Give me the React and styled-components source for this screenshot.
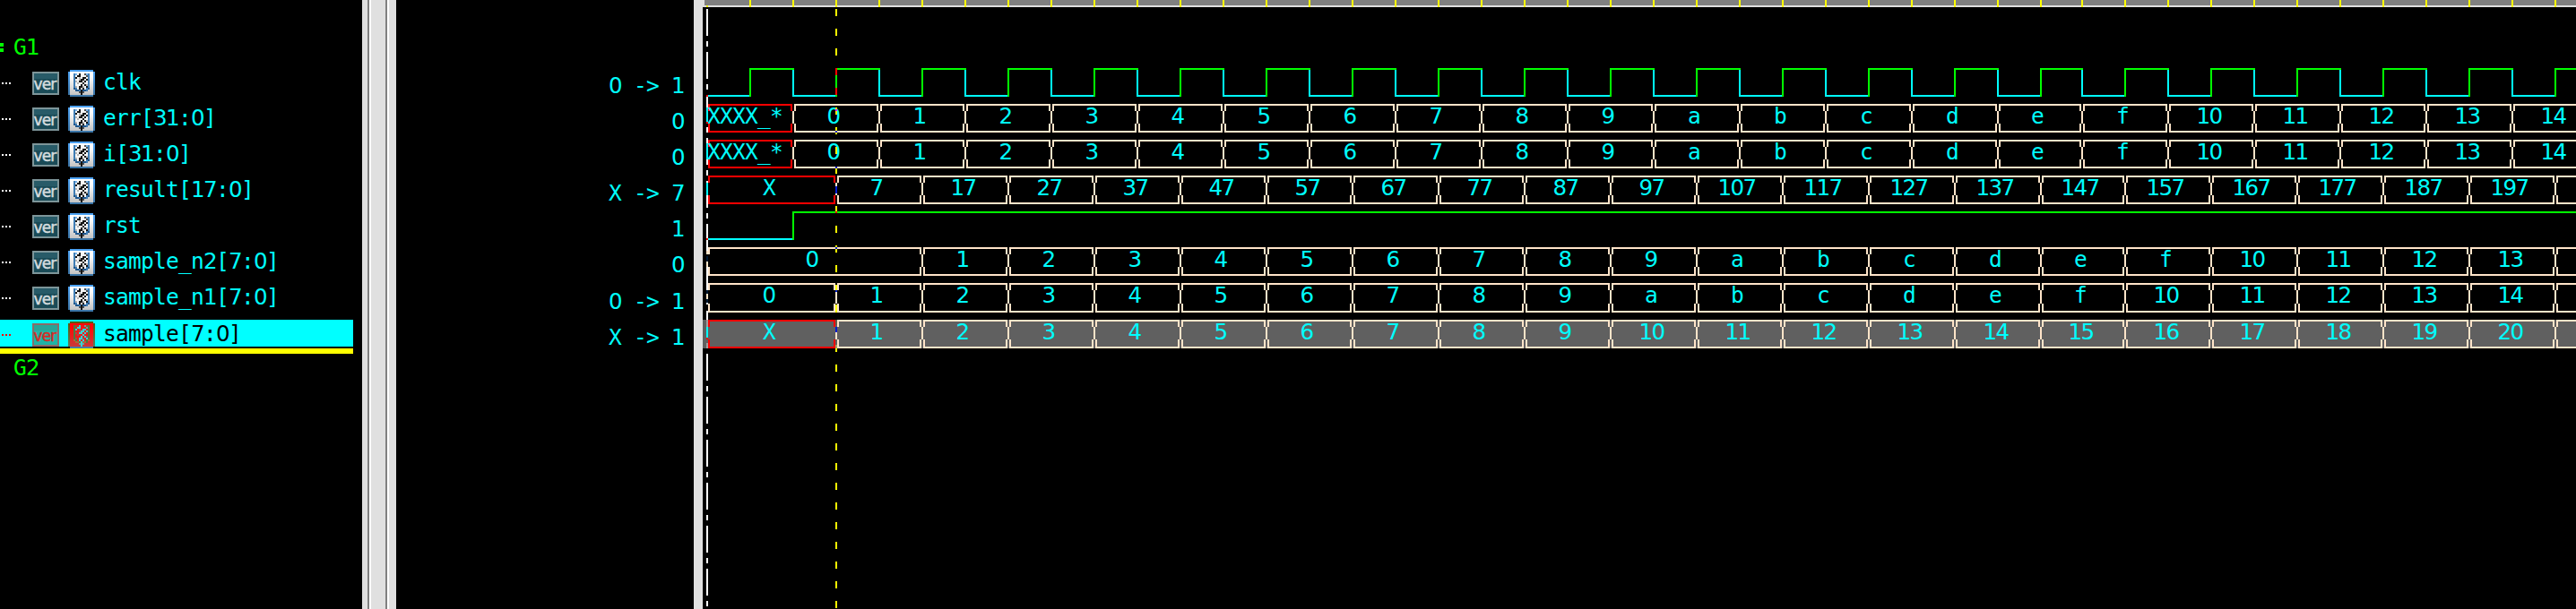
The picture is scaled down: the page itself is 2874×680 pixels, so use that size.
import React from "react";
import styled, { createGlobalStyle } from "styled-components";

const GlobalStyle = createGlobalStyle`
  html, body { margin: 0; padding: 0; background: #000; overflow: hidden; }
`;

const MONO = '"DejaVu Sans Mono", monospace';
const SANS = '"DejaVu Sans", sans-serif';
const CYAN = "#00ffff";
const GREEN = "#00ff00";
const RED = "#ff0000";
const TAN = "#ffe4c9";

const Viewer = styled.div`
  display: flex;
  width: 2874px;
  height: 680px;
  background: #000;
  overflow: hidden;
  font-family: ${MONO};
  font-size: 24.5px;
  letter-spacing: -0.75px;
  line-height: 30px;
  white-space: pre;
`;

const NamesPane = styled.div`
  width: 404px;
  flex: none;
  overflow: hidden;
`;

const Splitter = styled.div`
  width: 38px;
  flex: none;
  background: linear-gradient(
    90deg,
    #e0e0e0 0 6px, #808080 6px 8px, #fff 8px 10px,
    #e0e0e0 10px 26px, #808080 26px 28px, #fff 28px 30px, #e0e0e0 30px
  );
`;

const ValuesPane = styled.div`
  width: 332px;
  flex: none;
  box-sizing: border-box;
  padding: 76px 11px 0 0;
  color: ${CYAN};
  text-align: right;
`;

const Border = styled.div`
  width: 10px;
  flex: none;
  background: #e0e0e0;
`;

const WavePane = styled.div`
  width: 2090px;
  flex: none;
  position: relative;
  overflow: hidden;
`;

const Digits = styled.span`
  font-family: ${SANS};
  letter-spacing: -1.59px;
`;

const Group = styled.div`
  display: flex;
  align-items: flex-start;
  box-sizing: border-box;
  height: ${(p) => p.$height}px;
  padding-top: ${(p) => p.$top}px;
  color: ${GREEN};
`;

const Expander = styled.span`
  width: 4px;
  height: 10px;
  margin: 10px 11px 0 0;
  background: ${(p) =>
    p.$open ? `linear-gradient(${GREEN} 0 4px, transparent 4px 6px, ${GREEN} 6px)` : "none"};
`;

const SignalRow = styled.div`
  display: flex;
  align-items: flex-start;
  width: 394px;
  height: ${(p) => p.$height}px;
  color: ${(p) => (p.$selected ? "#000" : CYAN)};
  background: ${(p) => (p.$selected ? CYAN : "none")};
`;

const Branch = styled.span`
  width: 10px;
  height: 2px;
  margin: 16px 24px 0 2px;
  background: repeating-linear-gradient(
    90deg,
    ${(p) => (p.$selected ? RED : "#fff")} 0 2px,
    transparent 2px 4px
  );
`;

const VerBadge = styled.span`
  box-sizing: border-box;
  width: 30px;
  height: 26px;
  margin: 4px 10px 0 0;
  border: 2px solid ${(p) => (p.$selected ? "#8a6b68" : "#7d9599")};
  background: ${(p) =>
    p.$selected
      ? "linear-gradient(#28a497 0 6px, #20b2a5 6px)"
      : "linear-gradient(#285b68 0 6px, #1a4b57 6px)"};
  color: ${(p) => (p.$selected ? "#d82a26" : "#d5dcdf")};
  font: 17px/25px ${SANS};
  letter-spacing: -0.9px;
  text-indent: -0.5px;
  -webkit-text-stroke: 0.5px currentColor;
`;

const SignalIcon = styled.svg`
  flex: none;
  display: block;
  width: 30px;
  height: 30px;
  margin: 2px 9px 0 0;
`;

const SignalName = styled.span`
  padding-top: 1px;
`;

const InsertMark = styled.div`
  width: 394px;
  height: 6px;
  margin-top: 2px;
  background: #ff0;
`;

const ValueCell = styled.div`
  box-sizing: border-box;
  height: ${(p) => p.$height}px;
  padding-top: ${(p) => p.$top}px;
`;

const Ruler = styled.svg`
  display: block;
  width: 2090px;
  height: 8px;
  margin-bottom: 68px;
`;

const Lane = styled.svg`
  display: block;
  width: 2090px;
  height: ${(p) => p.$height}px;
  position: relative;
`;

const Cursors = styled.svg`
  position: absolute;
  left: 0;
  top: 0;
  width: 2090px;
  height: 680px;
  pointer-events: none;
`;

const split = (text) => text.split(/(\d+)/).filter(Boolean);

function Text({ children }) {
  return split(children).map((s, i) => (/\d/.test(s) ? <Digits key={i}>{s}</Digits> : s));
}

// 15x15 pixel map of the register symbol
const GLYPH = [
  "...............",
  "...............",
  "...blwkwwdlb...",
  "...bwkkwwwdb...",
  "...bkwgwkkwb...",
  "...bwwgkkwkb...",
  "...bgwkkwkwb...",
  "...bwgwwkwwb...",
  "...bwwwkwkgb...",
  "...bgwkkgwkb...",
  "...nbwkwkwbn...",
  "....nnbknnb....",
  "......dkd......",
  ".......k.......",
  "...............",
];

const INK = { b: "#3f7db5", l: "#79b4ea", k: "#141414", w: "#f6f6f6", g: "#b5b5b5", d: "#505050", n: "#1f568c" };
const INK_SELECTED = { b: "#4c7a3f", l: "#8c5a2a", k: "#35d5d5", w: "#f01818", g: "#9b5050", d: "#6aa0a0", n: "#a96a3a" };

function RegisterIcon({ selected }) {
  const ink = selected ? INK_SELECTED : INK;
  const id = selected ? "face-selected" : "face";
  return (
    <SignalIcon viewBox="0 0 15 15" shapeRendering="crispEdges">
      <defs>
        <linearGradient id={id} x1="0" y1="0" x2="0" y2="1">
          <stop offset="0.2" stopColor={selected ? "#ff0808" : "#fff"} />
          <stop offset="1" stopColor={selected ? "#c83a3a" : "#c4c4c4"} />
        </linearGradient>
        <linearGradient id={`${id}-edge`} x1="0" y1="0" x2="0" y2="1">
          <stop offset="0" stopColor={selected ? "#5a5a10" : "#4da3f5"} />
          <stop offset="1" stopColor={selected ? "#5a7a5a" : "#3b74a5"} />
        </linearGradient>
      </defs>
      <rect x="1" y="0" width="13" height="15" fill={`url(#${id}-edge)`} />
      <rect x="0" y="1" width="15" height="13" fill={`url(#${id}-edge)`} />
      <rect x="1" y="1" width="13" height="13" fill={`url(#${id})`} />
      {selected && <rect x="1" y="14" width="13" height="1" fill="#4a7ba3" />}
      {GLYPH.flatMap((row, y) =>
        [...row].map((c, x) =>
          c === "." ? null : <rect key={`${x}-${y}`} x={x} y={y} width="1" height="1" fill={ink[c]} />
        )
      )}
    </SignalIcon>
  );
}

// Edge k of the time axis, in pane pixels
const edge = (k) => 4 + 48 * k - (k >= 32 ? 2 : 0);
const LAST = 45;

const series = (first, format) => {
  const cells = [];
  for (let k = first, j = 0; k < 44; k += 2, j++) cells.push({ from: k, to: k + 2, text: k > 42 ? "" : format(j) });
  return cells;
};
const hex = (n) => n.toString(16);

const SIGNALS = [
  { name: "clk", value: "0 -> 1", height: 40, kind: "clock" },
  { name: "err[31:0]", value: "0", height: 40,
    cells: [{ from: 0, to: 2, text: "XXXX_*", unknown: true, at: 6 }, ...series(2, hex)] },
  { name: "i[31:0]", value: "0", height: 40,
    cells: [{ from: 0, to: 2, text: "XXXX_*", unknown: true, at: 6 }, ...series(2, hex)] },
  { name: "result[17:0]", value: "X -> 7", height: 40,
    cells: [{ from: 0, to: 3, text: "X", unknown: true }, ...series(3, (j) => String(7 + 10 * j))] },
  { name: "rst", value: "1", height: 40, kind: "reset" },
  { name: "sample_n2[7:0]", value: "0", height: 40,
    cells: [{ from: 0, to: 5, text: "0" }, ...series(5, (j) => hex(j + 1))] },
  { name: "sample_n1[7:0]", value: "0 -> 1", height: 41, tall: 1,
    cells: [{ from: 0, to: 3, text: "0" }, ...series(3, (j) => hex(j + 1))] },
  { name: "sample[7:0]", value: "X -> 1", height: 32, selected: true,
    cells: [{ from: 0, to: 3, text: "X", unknown: true }, ...series(3, (j) => String(j + 1))] },
];

function Bar({ x, y, w, h, c }) {
  return <rect x={x} y={y} width={w} height={h} fill={c} />;
}

function Clock() {
  const parts = [];
  for (let k = 0; k < LAST; k++) {
    const a = edge(k);
    const b = edge(k + 1);
    if (k % 2) {
      parts.push(<Bar key={k} x={a} y={0} w={2} h={32} c={GREEN} />);
      parts.push(<Bar key={`h${k}`} x={a} y={0} w={b - a + 2} h={2} c={GREEN} />);
    } else {
      if (k) parts.push(<Bar key={k} x={a} y={2} w={2} h={30} c={CYAN} />);
      parts.push(<Bar key={`h${k}`} x={k ? a : 6} y={30} w={b - (k ? a : 6)} h={2} c={CYAN} />);
    }
  }
  return parts;
}

function Reset() {
  return (
    <>
      <Bar x={6} y={30} w={94} h={2} c={CYAN} />
      <Bar x={100} y={0} w={2} h={32} c={GREEN} />
      <Bar x={100} y={0} w={1990} h={2} c={GREEN} />
    </>
  );
}

function BusCell({ from, to, text, unknown, at, tall = 0 }) {
  const a = edge(from);
  const b = edge(to);
  const c = unknown ? RED : TAN;
  const x = at ?? (a + b) / 2 - 2 * Math.ceil(text.length * 3.5);
  const start = /^\d/.test(text) ? x - 1.5 : x - 1;
  return (
    <>
      <path
        fill={c}
        d={`M${a + 2} 0H${b}V8H${b - 2}V2H${a + 4}V8H${a + 2}Z
            M${a + 2} ${22 + tall}H${a + 4}V${30 + tall}H${b - 2}V${22 + tall}H${b}V${32 + tall}H${a + 2}Z`}
      />
      {from > 0 && <Bar x={a} y={8} w={2} h={14 + tall} c={TAN} />}
      {text && (
        <text x={start} y={22} fill={CYAN} fontFamily={MONO}>
          {split(text).map((s, i) =>
            /\d/.test(s) ? (
              <tspan key={i} fontFamily={SANS} letterSpacing="-1.59">{s}</tspan>
            ) : (
              <tspan key={i}>{s}</tspan>
            )
          )}
        </text>
      )}
    </>
  );
}

const range = (start, end, step) => {
  const out = [];
  for (let y = start; y < end; y += step) out.push(y);
  return out;
};
const shift = (y) => (y > 345 ? y + 1 : y);

// Pixels where a cursor line crosses a signal: [x, y, height, colour]
const CROSSINGS = [
  [4, 106, 2, RED],
  [4, 120, 16, CYAN], [4, 136, 2, RED],
  [4, 160, 18, CYAN],
  [4, 204, 14, CYAN],
  [4, 266, 2, RED],
  [4, 280, 4, TAN], [4, 286, 6, "#001a33"], [4, 292, 6, TAN],
  [4, 324, 4, "#001a33"], [4, 328, 6, TAN], [4, 334, 4, "#001a33"],
  [4, 357, 8, "#9f9f9f"], [4, 365, 12, CYAN], [4, 377, 2, RED], [4, 383, 6, "#9f9f9f"],
  [148, 76, 8, RED], [148, 98, 8, RED],
  [148, 120, 2, "#ff0"], [148, 122, 2, "#ff00ff"], [148, 124, 4, "#ff0"],
  [148, 142, 4, "#ff0"], [148, 146, 2, "#001bd0"], [148, 148, 2, "#ff0"],
  [148, 164, 8, "#ff0"], [148, 186, 2, "#001bd0"],
  [148, 208, 8, "#001bd0"], [148, 236, 2, RED],
  [148, 276, 2, "#001bd0"],
  [148, 318, 6, "#ff0"], [148, 324, 2, "#001bd0"], [148, 341, 8, "#ff0"],
  [148, 357, 6, "#5e5e4a"], [148, 365, 6, "#001bd0"], [148, 385, 4, "#a0a060"],
];

export default function App() {
  return (
    <>
      <GlobalStyle />
      <Viewer>
        <NamesPane>
          <Group $height={76} $top={38}>
            <Expander $open />
            <span><Text>G1</Text></span>
          </Group>
          {SIGNALS.map((s) => (
            <SignalRow key={s.name} $height={s.selected ? 30 : s.height} $selected={s.selected}>
              <Branch $selected={s.selected} />
              <VerBadge $selected={s.selected}>ver</VerBadge>
              <RegisterIcon selected={s.selected} />
              <SignalName><Text>{s.name}</Text></SignalName>
            </SignalRow>
          ))}
          <InsertMark />
          <Group $height={40} $top={1}>
            <Expander />
            <span><Text>G2</Text></span>
          </Group>
        </NamesPane>
        <Splitter />
        <ValuesPane>
          {SIGNALS.map((s) => (
            <ValueCell key={s.name} $height={s.height} $top={5 + (s.tall || 0)}>
              <Text>{s.value}</Text>
            </ValueCell>
          ))}
        </ValuesPane>
        <Border />
        <WavePane>
          <Cursors shapeRendering="crispEdges">
            {range(10, 680, 48).flatMap((y) => [
              <Bar key={y} x={4} y={shift(y)} w={2} h={30} c="#fff" />,
              <Bar key={`s${y}`} x={4} y={shift(y + 36)} w={2} h={6} c="#fff" />,
            ])}
            {range(10, 680, 22).map((y) => (
              <Bar key={`y${y}`} x={148} y={shift(y)} w={2} h={8} c="#ff0" />
            ))}
          </Cursors>
          <Ruler shapeRendering="crispEdges">
            <Bar x={0} y={0} w={2090} h={8} c="#e0e0e0" />
            <Bar x={2} y={0} w={2088} h={6} c="#808080" />
            <Bar x={4} y={6} w={2} h={2} c="#ff0" />
            {range(1, LAST, 1).map((k) => (
              <Bar key={k} x={edge(k)} y={0} w={2} h={8} c="#ff0" />
            ))}
          </Ruler>
          {SIGNALS.map((s) => (
            <Lane key={s.name} $height={s.height} shapeRendering="crispEdges">
              {s.selected && <Bar x={0} y={0} w={2090} h={32} c="#606060" />}
              {s.kind === "clock" && <Clock />}
              {s.kind === "reset" && <Reset />}
              {s.cells?.map((c) => <BusCell key={c.from} {...c} tall={s.tall} />)}
            </Lane>
          ))}
          <Cursors shapeRendering="crispEdges">
            {CROSSINGS.map(([x, y, h, c]) => (
              <Bar key={`${x}-${y}`} x={x} y={y} w={2} h={h} c={c} />
            ))}
          </Cursors>
        </WavePane>
      </Viewer>
    </>
  );
}
